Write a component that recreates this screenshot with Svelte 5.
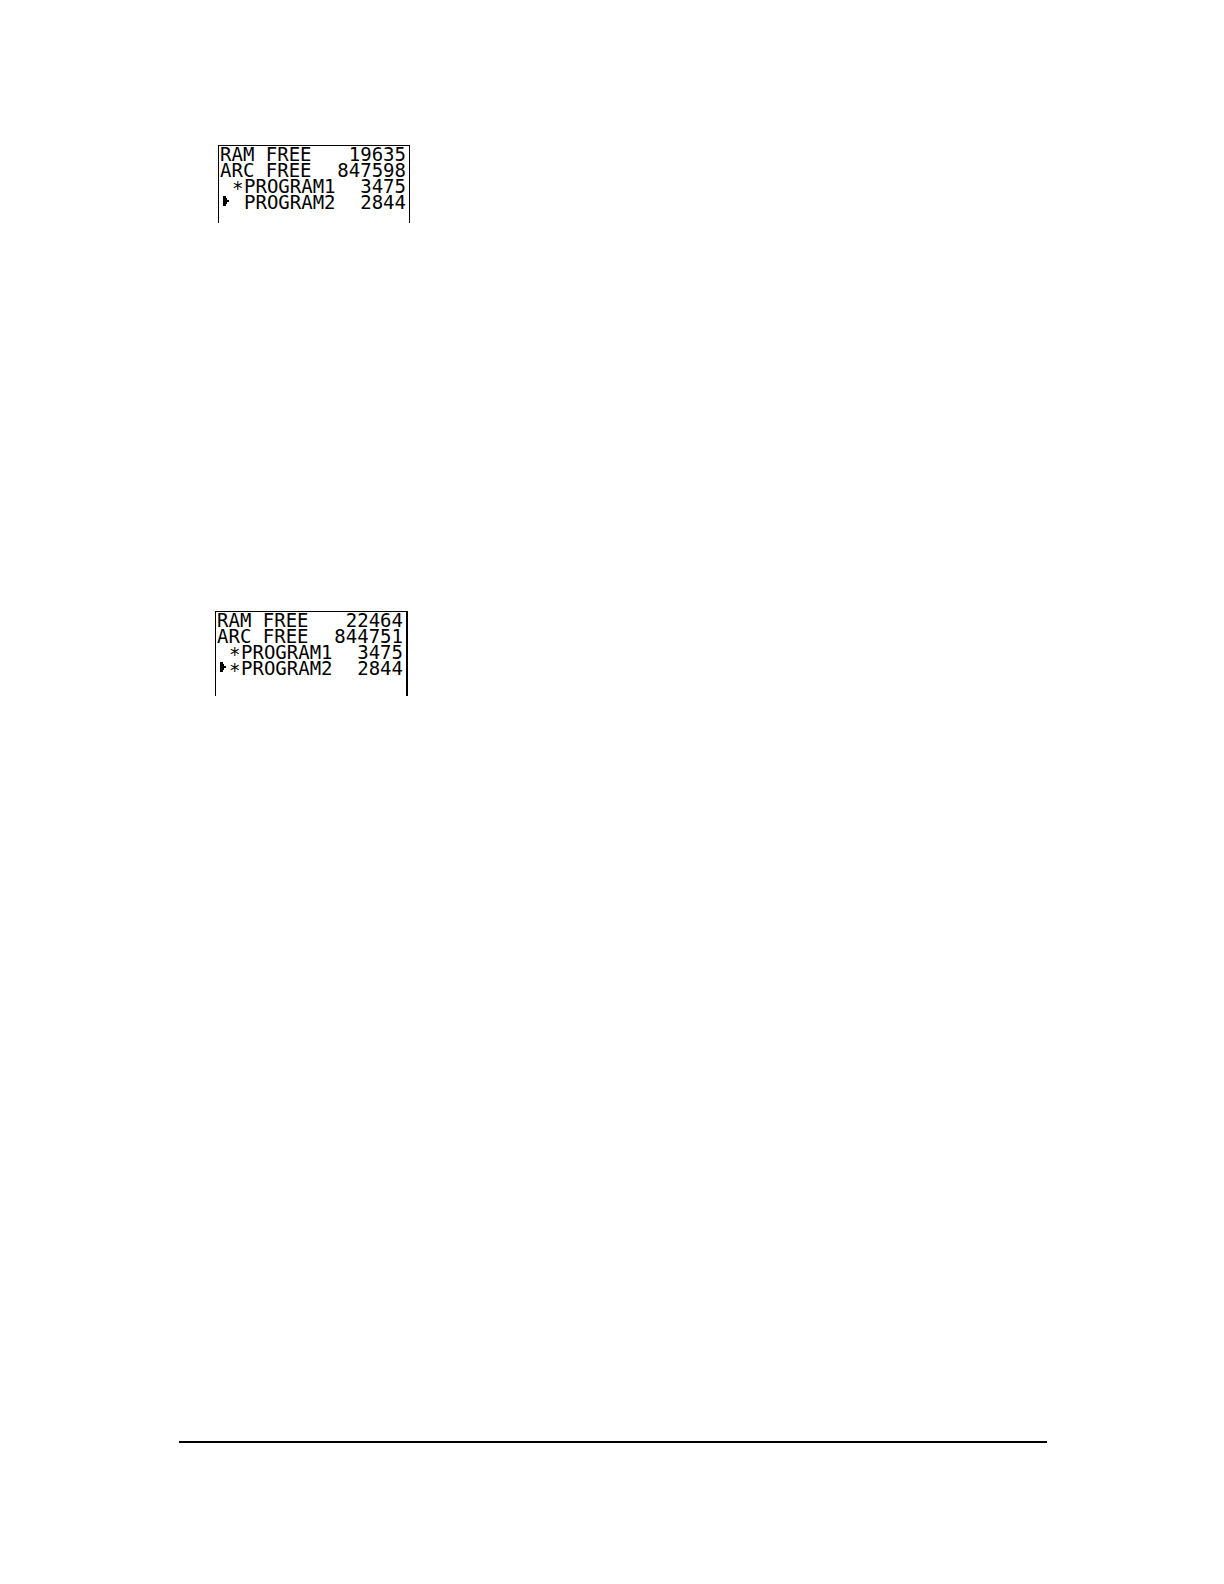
<script lang="ts">
	type Program = { name: string; size: number; archived: boolean };
	type Screen = { ram: number; arc: number; programs: Program[]; selected: number };

	const screens: Screen[] = [
		{
			ram: 19635,
			arc: 847598,
			programs: [
				{ name: 'PROGRAM1', size: 3475, archived: true },
				{ name: 'PROGRAM2', size: 2844, archived: false }
			],
			selected: 1
		},
		{
			ram: 22464,
			arc: 844751,
			programs: [
				{ name: 'PROGRAM1', size: 3475, archived: true },
				{ name: 'PROGRAM2', size: 2844, archived: true }
			],
			selected: 1
		}
	];
</script>

<div class="page">
	<main>
		{#each screens as screen, i}
			<table class="lcd" class:after={i > 0}>
				<colgroup>
					<col class="cell" />
					<col class="cell" />
					<col />
					<col class="size" />
				</colgroup>
				<tbody>
					<tr>
						<td colspan="3">RAM FREE</td>
						<td class="value">{screen.ram}</td>
					</tr>
					<tr>
						<td colspan="3">ARC FREE</td>
						<td class="value">{screen.arc}</td>
					</tr>
					{#each screen.programs as program, row}
						<tr>
							<td class="cursor">
								{#if row === screen.selected}
									<svg width="6" height="10" viewBox="0 0 6 10" shape-rendering="crispEdges">
										<path d="M0 0h3v2h1v2h2v2H4v2H3v2H0z" />
									</svg>
								{/if}
							</td>
							<td>{#if program.archived}<span class="star">*</span>{/if}</td>
							<td>{program.name}</td>
							<td class="value">{program.size}</td>
						</tr>
					{/each}
				</tbody>
			</table>
		{/each}
	</main>
	<hr />
</div>

<style>
	:global(body) {
		margin: 0;
		background: #fff;
	}

	.page {
		box-sizing: border-box;
		min-height: 100vh;
		display: flex;
		flex-direction: column;
		justify-content: space-between;
		padding: 145px 177px 141px 179px;
	}

	main {
		display: flex;
		flex-direction: column;
		align-items: flex-start;
		gap: 388px;
		padding-left: 36px;
	}

	/* The bottom of the display is left open */
	.lcd {
		box-sizing: border-box;
		width: 192px;
		margin-left: 3px;
		padding: 0 3px 13px 1px;
		border: 1px solid #000;
		border-bottom: 0;
		border-spacing: 0;
		table-layout: fixed;
		color: #000;
		font-family: 'DejaVu Sans Mono', 'Liberation Mono', monospace;
		font-size: 19px;
		line-height: 16px;
	}

	.lcd.after {
		width: 193px;
		margin-left: 0;
		padding-bottom: 20px;
		border-right-width: 2px;
	}

	.cell {
		width: 12px;
	}

	.size {
		width: 70px;
	}

	td {
		height: 16px;
		padding: 0;
		white-space: nowrap;
	}

	.value {
		text-align: right;
	}

	.cursor {
		box-sizing: border-box;
		padding: 2px 0 0 3px;
		line-height: 0;
		vertical-align: top;
	}

	.cursor svg {
		display: block;
	}

	/* Sits mid-height like the other characters */
	.star {
		line-height: 0;
		vertical-align: -2px;
	}

	hr {
		width: 100%;
		height: 2px;
		margin: 0;
		border: 0;
		background: #000;
	}
</style>
